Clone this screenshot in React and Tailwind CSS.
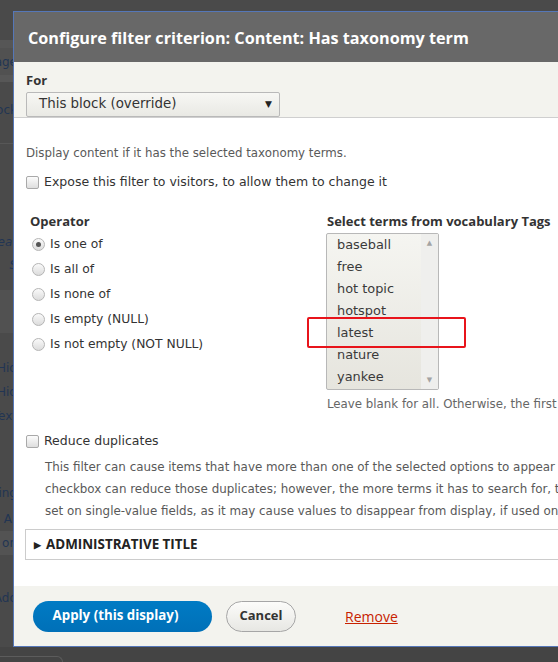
import React from "react";

const strip = [
  { h: 40, bg: "bg-[#4a4a4a]" },
  { h: 8, bg: "bg-[#565656]" },
  { h: 27, bg: "bg-[#515151]", t: "Manage" },
  { h: 7, bg: "bg-[#575757]" },
  { h: 13, bg: "bg-[#4a4a4a]" },
  { h: 30, bg: "bg-[#4a4a4a]", t: "Block" },
  { h: 18, bg: "bg-[#4a4a4a]" },
  { h: 1, bg: "bg-[#575757]" },
  { h: 86, bg: "bg-[#4a4a4a]" },
  { h: 23, bg: "bg-[#4a4a4a]", t: "Creat", it: true },
  { h: 24, bg: "bg-[#4a4a4a]", t: "S", it: true },
  { h: 13, bg: "bg-[#4a4a4a]" },
  { h: 43, bg: "bg-[#515151]" },
  { h: 23, bg: "bg-[#4a4a4a]" },
  { h: 24, bg: "bg-[#4a4a4a]", t: "Hid" },
  { h: 24, bg: "bg-[#4a4a4a]", t: "Hid" },
  { h: 24, bg: "bg-[#4a4a4a]", t: "Text" },
  { h: 27, bg: "bg-[#4a4a4a]" },
  { h: 24, bg: "bg-[#4a4a4a]", t: "I", b: true },
  { h: 28, bg: "bg-[#4a4a4a]", t: "Sing" },
  { h: 24, bg: "bg-[#4a4a4a]", t: "Ar" },
  { h: 24, bg: "bg-[#535353]", t: "on" },
  { h: 31, bg: "bg-[#4a4a4a]" },
  { h: 24, bg: "bg-[#4a4a4a]", t: "Add" },
  { h: 37, bg: "bg-[#4a4a4a]" },
];

const terms = ["baseball", "free", "hot topic", "hotspot", "latest", "nature", "yankee"];
const ops = ["Is one of", "Is all of", "Is none of", "Is empty (NULL)", "Is not empty (NOT NULL)"];

function Checkbox() {
  return (
    <span className="inline-block h-[13px] w-[13px] shrink-0 rounded-[2px] border border-[#a9a9a9] bg-gradient-to-b from-[#fcfcfc] to-[#dedede]" />
  );
}

function Radio({ on }) {
  return (
    <span className="flex h-[13px] w-[13px] shrink-0 items-center justify-center rounded-full border border-[#b5b5b5] bg-gradient-to-b from-[#fafafa] to-[#dcdcdc]">
      {on && <span className="h-[5px] w-[5px] rounded-full bg-[#555]" />}
    </span>
  );
}

export default function App() {
  return (
    <div className="relative h-[662px] w-[558px] overflow-hidden bg-[#4a4a4a] font-['DejaVu_Sans',sans-serif]">
      <div className="flex h-[647px] w-[13px] flex-col overflow-hidden">
        {strip.map((r, i) => (
          <div
            key={i}
            style={{ height: r.h }}
            className={`flex items-center justify-end whitespace-nowrap text-[12px] text-[#223553] ${r.bg} ${r.it ? "italic" : ""} ${r.b ? "font-bold" : ""}`}
          >
            {r.t && <span className="-mr-[4px]">{r.t}</span>}
          </div>
        ))}
      </div>
      <div className="h-[15px] bg-[#444] pt-[9px]">
        <div className="h-[6px] w-[63px] rounded-tr-[8px] border-t border-r border-[#5c5c5c]" />
      </div>

      {/* dialog */}
      <div className="absolute left-[13px] top-[11px] flex h-[636px] w-[900px] flex-col border border-[#5577b8] bg-white">
        <div className="flex h-[50px] items-center bg-[#686868] pl-[14px] pt-[2px] font-['Open_Sans',sans-serif] text-[16.2px] font-bold text-white">
          Configure filter criterion: Content: Has taxonomy term
        </div>

        <div className="h-[56px] border-b border-[#cfcfcf] bg-[#f3f3ee] pl-[12px] pt-[10px]">
          <div className="h-[16px] font-['Open_Sans',sans-serif] text-[13px] leading-[16px] font-bold text-[#333]">For</div>
          <div className="mt-[4px] flex h-[25px] w-[254px] items-center justify-between rounded-[2px] border border-[#b9b9b9] bg-gradient-to-b from-[#f7f7f4] to-[#e9e9e4] pl-[12px] pr-[7px] text-[13.4px] text-[#333]">
            <span>This block (override)</span>
            <span className="text-[9px] text-[#222]">▼</span>
          </div>
        </div>

        <div className="relative h-[468px] px-[12px] pt-[26px] text-[#333]">
          <div className="h-[18px] text-[11.8px] leading-[18px] text-[#595959]">
            Display content if it has the selected taxonomy terms.
          </div>
          <div className="mt-[11px] flex h-[18px] items-center gap-[5px] text-[12.5px]">
            <Checkbox />
            <span>Expose this filter to visitors, to allow them to change it</span>
          </div>

          <div className="mt-[21px] flex">
            <div className="w-[300px] pl-[4px]">
              <div className="h-[18px] font-['Open_Sans',sans-serif] text-[13px] leading-[18px] font-bold">Operator</div>
              <div className="pt-[2px]">
                {ops.map((o, i) => (
                  <div key={o} className="flex h-[25px] items-center gap-[5px] pl-[2px] text-[12.3px]">
                    <Radio on={i === 0} />
                    <span>{o}</span>
                  </div>
                ))}
              </div>
            </div>
            <div>
              <div className="h-[18px] pl-[1px] font-['Open_Sans',sans-serif] text-[13px] leading-[18px] font-bold whitespace-nowrap">
                Select terms from vocabulary Tags
              </div>
              <div className="mt-[3px] flex h-[157px] w-[113px] rounded-[2px] border border-[#b8b8b8] bg-gradient-to-b from-[#f5f5f1] to-[#e6e5de]">
                <div className="flex-1 pl-[10px]">
                  {terms.map((t) => (
                    <div key={t} className="h-[22px] text-[12.9px] leading-[22px] text-[#3a3a3a]">
                      {t}
                    </div>
                  ))}
                </div>
                <div className="flex w-[17px] flex-col items-center justify-between bg-[#efefed] py-[4px] text-[7px] text-[#a3a3a3]">
                  <span>▲</span>
                  <span>▼</span>
                </div>
              </div>
              <div className="mt-[5px] h-[18px] pl-[1px] text-[11.8px] leading-[18px] whitespace-nowrap text-[#666]">
                Leave blank for all. Otherwise, the first selected term will be the default instead of "Any".
              </div>
            </div>
          </div>

          <div className="mt-[19px] flex h-[18px] items-center gap-[5px] text-[12.5px]">
            <Checkbox />
            <span>Reduce duplicates</span>
          </div>
          <div className="mt-[6px] pl-[19px] text-[11.9px] leading-[22px] whitespace-nowrap text-[#595959]">
            <div>This filter can cause items that have more than one of the selected options to appear as duplicate results. If this filter causes duplicate results to occur, this</div>
            <div>checkbox can reduce those duplicates; however, the more terms it has to search for, the less performant the query will be, so use this with caution. Shouldn't be</div>
            <div>set on single-value fields, as it may cause values to disappear from display, if used on an incompatible field.</div>
          </div>

          <div className="-ml-[1px] mt-[7px] flex h-[31px] items-center border border-[#cccccc] pl-[8px] font-['Open_Sans',sans-serif] text-[13.4px] font-bold text-[#222]">
            <span className="mr-[5px] text-[9px]">▶</span>
            ADMINISTRATIVE TITLE
          </div>

          {/* highlight annotation */}
          <div className="absolute left-[293px] top-[199px] h-[31px] w-[159px] rounded-[2px] border-2 border-[#e8141b]" />
        </div>

        <div className="flex h-[60px] items-center bg-[#f3f3ee] pl-[19px] font-['Open_Sans',sans-serif]">
          <button className="h-[31px] w-[179px] rounded-full bg-gradient-to-b from-[#007bc4] to-[#0070b8] pr-[14px] text-[13.3px] font-bold text-white">
            Apply (this display)
          </button>
          <button className="ml-[14px] h-[31px] w-[70px] rounded-full border border-[#a6a6a6] bg-gradient-to-b from-[#fcfcfa] to-[#e7e7e3] text-[13px] font-bold text-[#333]">
            Cancel
          </button>
          <span className="ml-[49px] text-[14px] text-[#c72100] underline">Remove</span>
        </div>
      </div>
    </div>
  );
}
